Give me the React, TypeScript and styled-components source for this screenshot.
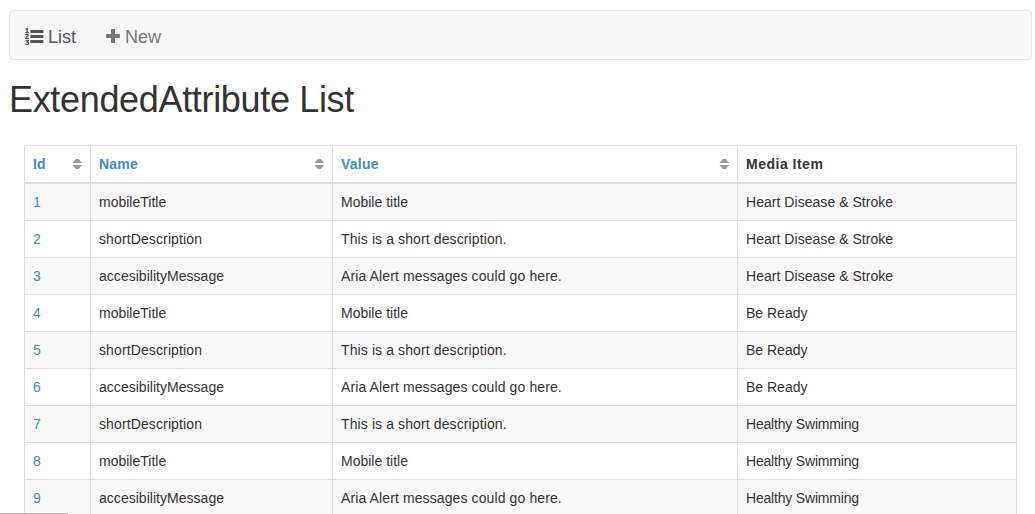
import React from "react";
import styled, { createGlobalStyle } from "styled-components";

const GlobalStyle = createGlobalStyle`
  *, *::before, *::after { box-sizing: border-box; }
  html, body { margin: 0; height: 100%; overflow: hidden; background: #fff; }
  body {
    font-family: "Liberation Sans", Arial, Helvetica, sans-serif;
    font-size: 14px;
    line-height: 20px;
    color: #333;
  }
`;

const Page = styled.div`
  height: 514px;
  overflow: hidden;
  padding: 10px 3px 0 9px;
`;

const Navbar = styled.nav`
  display: flex;
  height: 50px;
  border: 1px solid #e7e7e7;
  border-radius: 4px;
  background: #f8f8f8;
`;

const NavItem = styled.a<{ $active?: boolean }>`
  display: flex;
  align-items: center;
  gap: 4px;
  padding: 3px 15px 0;
  font-size: 18px;
  line-height: 20px;
  text-decoration: none;
  color: ${(p) => (p.$active ? "#555" : "#777")};
  svg { display: block; flex: none; }
`;

const Title = styled.h1`
  margin: 20px 0 25px;
  font-size: 36px;
  font-weight: 400;
  line-height: 40px;
  letter-spacing: -0.33px;
`;

const Table = styled.table`
  width: 993px;
  margin-left: 15px;
  table-layout: fixed;
  border-collapse: separate;
  border-spacing: 0;
  border: solid #ddd;
  border-width: 1px 0 0 1px;
`;

const Col = styled.col<{ $width: number }>`
  width: ${(p) => p.$width}px;
`;

const HeadCell = styled.th<{ $tracking: number }>`
  padding: 8px;
  text-align: left;
  font-weight: 700;
  letter-spacing: ${(p) => p.$tracking}px;
  border: solid #ddd;
  border-width: 0 1px 2px 0;
`;

const HeadContent = styled.div`
  display: flex;
  align-items: center;
  justify-content: space-between;
  height: 20px;
`;

const Row = styled.tr`
  &:nth-child(odd) { background: #f9f9f9; }
`;

const Cell = styled.td<{ $tracking?: number }>`
  padding: 8px;
  letter-spacing: ${(p) => p.$tracking ?? 0}px;
  border: solid #ddd;
  border-width: 0 1px 1px 0;
`;

const Link = styled.a`
  color: #428bca;
  text-decoration: none;
`;

const StatusEdge = styled.div`
  position: fixed;
  left: 0;
  bottom: 0;
  width: 68px;
  height: 1px;
  background: #bfbfbf;
`;

const ListIcon = () => (
  <svg width="19" height="17" viewBox="0 0 19 17" fill="none">
    <path d="M5.400 2h13v3h-13zM5.400 7h13v3h-13zM5.400 12h13v3h-13z" fill="currentColor" />
    <path
      d="M.7 1.300 2.200.5v4M.6 4.500h3.200M.6 7.200C1.200 6 3.400 6.200 3.200 7.400 3.100 8.300.9 9 .9 10.400h2.900M.6 12.500h2.700L2 14.100c2.100.1 1.900 2.400.1 2.400-.7 0-1.200-.2-1.700-.5"
      stroke="currentColor"
      strokeWidth="1.300"
    />
  </svg>
);

const PlusIcon = () => (
  <svg width="15" height="15" viewBox="0 0 15 15">
    <path
      d="M5.800 0h2.400q.8 0 .8.8V5h4.200q.8 0 .8.8v2.400q0 .8-.8.8H9v4.200q0 .8-.8.8H5.800q-.8 0-.8-.8V9H.8Q0 9 0 8.200V5.800Q0 5 .8 5H5V.8Q5 0 5.800 0z"
      fill="currentColor"
    />
  </svg>
);

const SortIcon = () => (
  <svg width="10" height="10" viewBox="0 0 10 10">
    <path
      d="M.8 4Q.2 4 .7 3.400L4 0h2.600l3.200 3.400Q10.200 4 9.700 4zM.8 6Q.2 6 .7 6.600L4 10h2.600l3.200-3.400Q10.200 6 9.700 6z"
      fill="#999"
    />
  </svg>
);

const columns = [
  { label: "Id", width: 66, tracking: 0, sortable: true },
  { label: "Name", width: 242, tracking: 0.2, sortable: true },
  { label: "Value", width: 405, tracking: 0.22, sortable: true },
  { label: "Media Item", width: 279, tracking: 0.5, sortable: false },
];

const values: Record<string, string> = {
  mobileTitle: "Mobile title",
  shortDescription: "This is a short description.",
  accesibilityMessage: "Aria Alert messages could go here.",
};

const tracking: Record<string, number> = {
  shortDescription: 0.12,
  accesibilityMessage: 0.03,
  "This is a short description.": 0.11,
  "Aria Alert messages could go here.": 0.11,
  "Heart Disease & Stroke": 0.04,
  "Healthy Swimming": -0.19,
};

const rows = [
  ["mobileTitle", "Heart Disease & Stroke"],
  ["shortDescription", "Heart Disease & Stroke"],
  ["accesibilityMessage", "Heart Disease & Stroke"],
  ["mobileTitle", "Be Ready"],
  ["shortDescription", "Be Ready"],
  ["accesibilityMessage", "Be Ready"],
  ["shortDescription", "Healthy Swimming"],
  ["mobileTitle", "Healthy Swimming"],
  ["accesibilityMessage", "Healthy Swimming"],
];

export default function App() {
  return (
    <Page>
      <GlobalStyle />
      <Navbar>
        <NavItem $active><ListIcon />List</NavItem>
        <NavItem><PlusIcon />New</NavItem>
      </Navbar>
      <Title>ExtendedAttribute List</Title>
      <Table>
        <colgroup>
          {columns.map((c) => <Col key={c.label} $width={c.width} />)}
        </colgroup>
        <thead>
          <tr>
            {columns.map((c) => (
              <HeadCell key={c.label} $tracking={c.tracking}>
                <HeadContent>
                  {c.sortable ? <Link>{c.label}</Link> : c.label}
                  {c.sortable && <SortIcon />}
                </HeadContent>
              </HeadCell>
            ))}
          </tr>
        </thead>
        <tbody>
          {rows.map(([name, media], i) => (
            <Row key={i}>
              <Cell><Link>{i + 1}</Link></Cell>
              {[name, values[name], media].map((text) => (
                <Cell key={text} $tracking={tracking[text]}>{text}</Cell>
              ))}
            </Row>
          ))}
        </tbody>
      </Table>
      <StatusEdge />
    </Page>
  );
}
